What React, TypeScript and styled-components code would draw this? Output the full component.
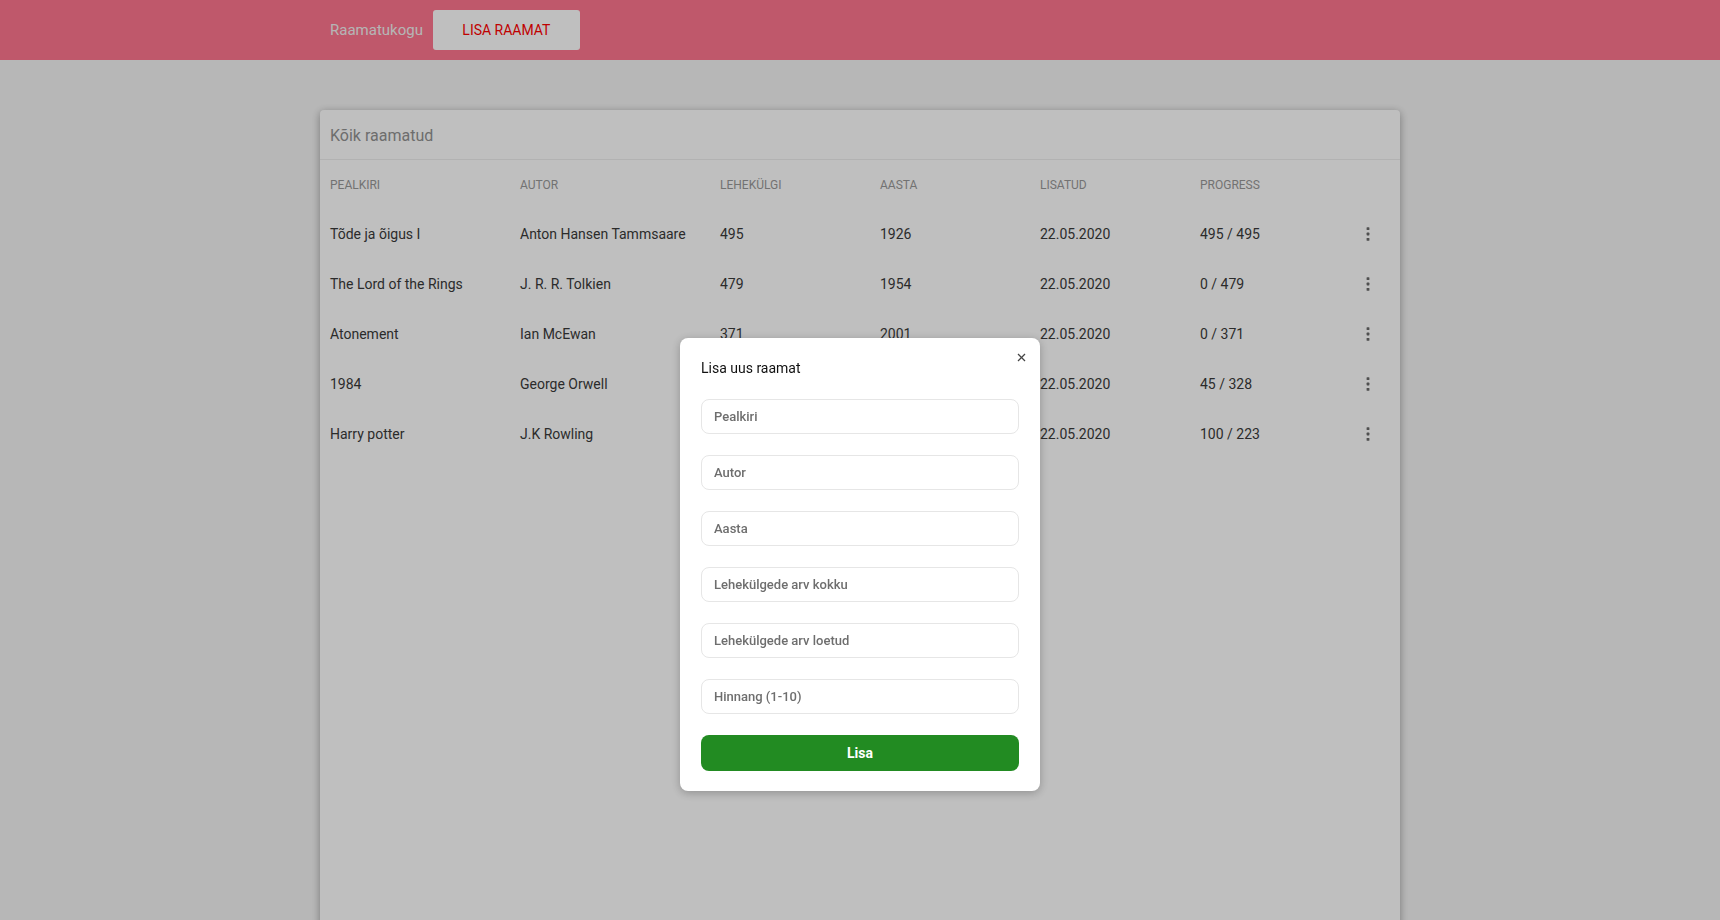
import React from "react";
import styled, { createGlobalStyle } from "styled-components";

const GlobalStyle = createGlobalStyle`
  html, body { margin: 0; padding: 0; }
  body {
    background: #f5f5f5;
    font-family: Roboto, "Noto Sans", Arial, sans-serif;
    overflow: hidden;
  }
  * { box-sizing: border-box; }
`;

const TopBar = styled.header`
  height: 60px;
  background: #ff768f;
`;

const TopInner = styled.nav`
  width: 1080px;
  margin: 0 auto;
  height: 100%;
  display: flex;
  align-items: center;
  gap: 10px;
  padding-left: 10px;
`;

const Brand = styled.span`
  font-size: 15px;
  color: #f2f2f2;
`;

const NavButton = styled.button`
  width: 147px;
  height: 40px;
  border: none;
  border-radius: 3px;
  background: #ffffff;
  color: #ff0000;
  font-family: Roboto, Arial, sans-serif;
  font-size: 14px;
  cursor: pointer;
`;

const Card = styled.section`
  width: 1080px;
  height: 830px;
  margin: 50px auto 0;
  background: #ffffff;
  border-radius: 4px;
  box-shadow: 0 2px 8px rgba(0, 0, 0, 0.35);
`;

const CardTitle = styled.div`
  height: 50px;
  display: flex;
  align-items: center;
  padding: 1px 0 0 10px;
  font-size: 16px;
  color: #929292;
  border-bottom: 1px solid #eeeeee;
`;

const Row = styled.div<{ $head?: boolean }>`
  display: grid;
  grid-template-columns: 190px 200px 160px 160px 160px 1fr 40px;
  align-items: center;
  height: ${(p) => (p.$head ? "49px" : "50px")};
  padding: 0 12px 0 10px;
  font-size: ${(p) => (p.$head ? "12px" : "14px")};
  color: ${(p) => (p.$head ? "#999999" : "#3a3a3a")};
  text-transform: ${(p) => (p.$head ? "uppercase" : "none")};
`;

const Cell = styled.span`
  white-space: nowrap;
`;

const MenuButton = styled.button`
  display: flex;
  justify-content: center;
  align-items: center;
  background: none;
  border: none;
  padding: 0;
  height: 24px;
  color: #6a6a6a;
  cursor: pointer;
`;

const Backdrop = styled.div`
  position: fixed;
  inset: 0;
  background: rgba(0, 0, 0, 0.25);
  display: flex;
  justify-content: center;
  align-items: flex-start;
  padding-top: 338px;
`;

const Modal = styled.div`
  position: relative;
  width: 360px;
  background: #ffffff;
  border-radius: 8px;
  box-shadow: 0 2px 10px rgba(0, 0, 0, 0.25);
  padding: 20px 21px 20px;
  display: flex;
  flex-direction: column;
  gap: 21px;
`;

const ModalTitle = styled.h2`
  margin: 0;
  font-size: 14px;
  line-height: 20px;
  font-weight: 400;
  color: #111111;
  font-family: Roboto, Arial, sans-serif;
`;

const CloseButton = styled.button`
  position: absolute;
  top: 12px;
  right: 12px;
  width: 14px;
  height: 14px;
  padding: 0;
  border: none;
  background: none;
  display: flex;
  align-items: center;
  justify-content: center;
  color: #444444;
  cursor: pointer;
`;

const Input = styled.input`
  height: 35px;
  width: 100%;
  border: 1px solid #e6e6e6;
  border-radius: 8px;
  padding: 0 12px;
  font-family: Roboto, Arial, sans-serif;
  font-size: 13px;
  font-weight: 500;
  outline: none;
  &::placeholder { color: #6e6e6e; }
`;

const SubmitButton = styled.button`
  height: 36px;
  width: 100%;
  border: none;
  border-radius: 8px;
  background: #228b22;
  color: #ffffff;
  font-family: Roboto, Arial, sans-serif;
  font-size: 14px;
  font-weight: 700;
  cursor: pointer;
`;

const DotsIcon = () => (
  <svg width="4" height="16" viewBox="0 0 4 16" fill="currentColor">
    <rect x="0.6" y="1.2" width="2.8" height="2.8" rx="0.6" />
    <rect x="0.6" y="6.6" width="2.8" height="2.8" rx="0.6" />
    <rect x="0.6" y="12" width="2.8" height="2.8" rx="0.6" />
  </svg>
);

const CloseIcon = () => (
  <svg width="9" height="9" viewBox="0 0 9 9" stroke="currentColor" strokeWidth="1.2">
    <line x1="1" y1="1" x2="8" y2="8" />
    <line x1="8" y1="1" x2="1" y2="8" />
  </svg>
);

const books = [
  { title: "Tõde ja õigus I", author: "Anton Hansen Tammsaare", pages: 495, year: 1926, added: "22.05.2020", read: 495 },
  { title: "The Lord of the Rings", author: "J. R. R. Tolkien", pages: 479, year: 1954, added: "22.05.2020", read: 0 },
  { title: "Atonement", author: "Ian McEwan", pages: 371, year: 2001, added: "22.05.2020", read: 0 },
  { title: "1984", author: "George Orwell", pages: 328, year: 1949, added: "22.05.2020", read: 45 },
  { title: "Harry potter", author: "J.K Rowling", pages: 223, year: 1997, added: "22.05.2020", read: 100 },
];

const fields = [
  "Pealkiri",
  "Autor",
  "Aasta",
  "Lehekülgede arv kokku",
  "Lehekülgede arv loetud",
  "Hinnang (1-10)",
];

export default function App() {
  return (
    <>
      <GlobalStyle />
      <TopBar>
        <TopInner>
          <Brand>Raamatukogu</Brand>
          <NavButton>LISA RAAMAT</NavButton>
        </TopInner>
      </TopBar>
      <Card>
        <CardTitle>Kõik raamatud</CardTitle>
        <Row $head>
          <Cell>Pealkiri</Cell>
          <Cell>Autor</Cell>
          <Cell>Lehekülgi</Cell>
          <Cell>Aasta</Cell>
          <Cell>Lisatud</Cell>
          <Cell>Progress</Cell>
          <Cell />
        </Row>
        {books.map((b) => (
          <Row key={b.title}>
            <Cell>{b.title}</Cell>
            <Cell>{b.author}</Cell>
            <Cell>{b.pages}</Cell>
            <Cell>{b.year}</Cell>
            <Cell>{b.added}</Cell>
            <Cell>
              {b.read} / {b.pages}
            </Cell>
            <MenuButton aria-label="menu">
              <DotsIcon />
            </MenuButton>
          </Row>
        ))}
      </Card>
      <Backdrop>
        <Modal>
          <CloseButton aria-label="close">
            <CloseIcon />
          </CloseButton>
          <ModalTitle>Lisa uus raamat</ModalTitle>
          {fields.map((f) => (
            <Input key={f} placeholder={f} />
          ))}
          <SubmitButton>Lisa</SubmitButton>
        </Modal>
      </Backdrop>
    </>
  );
}
